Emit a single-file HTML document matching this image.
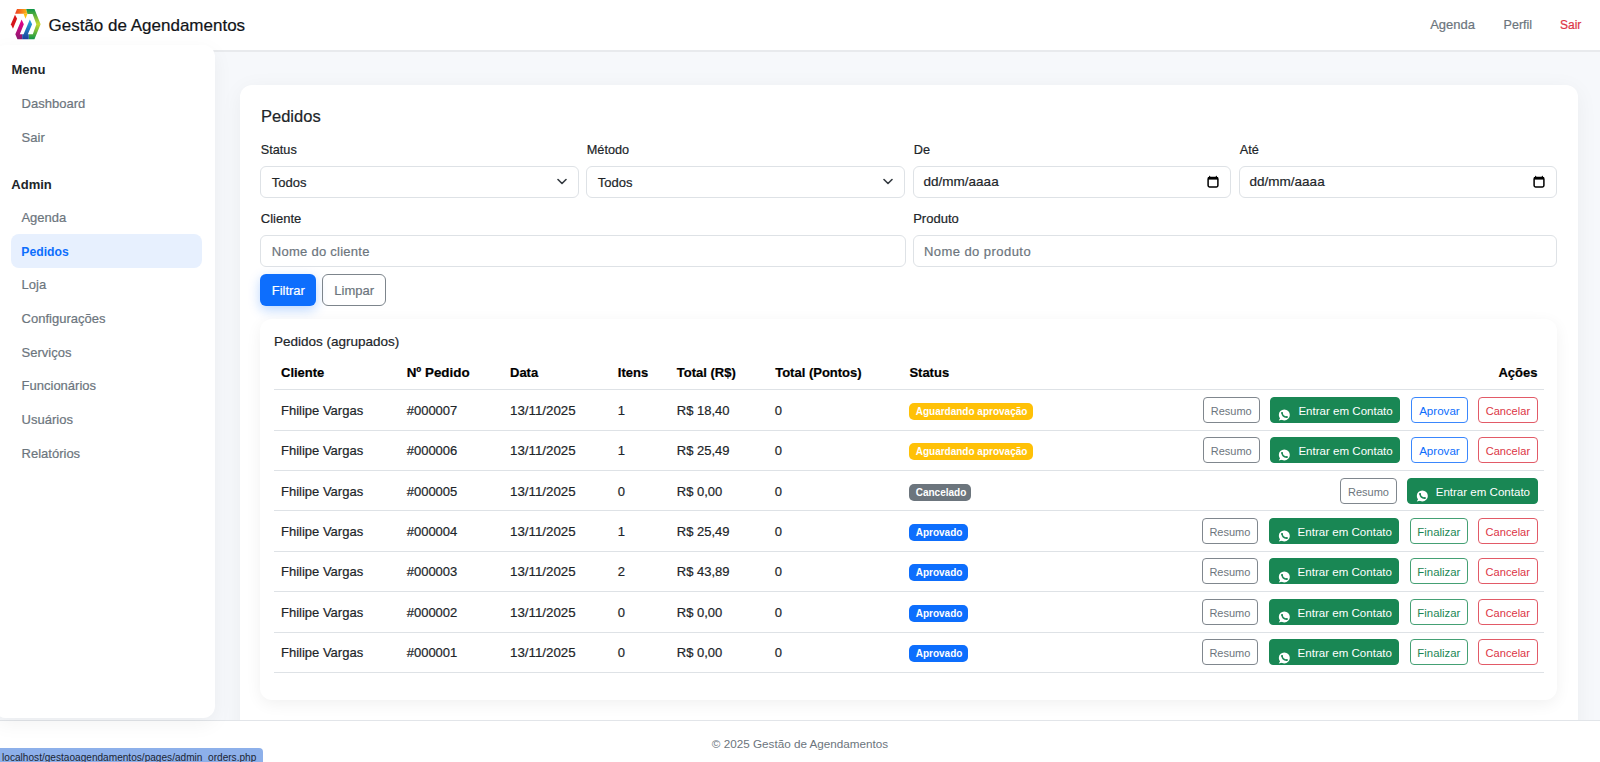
<!DOCTYPE html>
<html lang="pt-br">
<head>
<meta charset="utf-8">
<title>Gestão de Agendamentos</title>
<style>
*{box-sizing:border-box;margin:0;padding:0}
html,body{width:1600px;height:762px;overflow:hidden;background:#fff}
body{position:relative;font-family:"Liberation Sans",sans-serif;font-size:13px;color:#212529}
.abs{position:absolute}
.t{position:absolute;white-space:nowrap;line-height:1;-webkit-text-stroke:0.2px currentColor}
.layer{position:absolute;left:0;top:0;width:0;height:0}
#hdr{position:absolute;left:0;top:0;width:1600px;height:52px;background:#fff;border-bottom:2px solid #e8eaed}
#graybg{position:absolute;left:0;top:52px;width:1600px;height:668px;background:#f6f8fb}
#side{position:absolute;left:-6px;top:45px;width:221px;height:673px;background:#fff;border-radius:12px;box-shadow:0 6px 20px rgba(0,0,0,.05);z-index:5}
#main{position:absolute;left:240px;top:85px;width:1338px;height:700px;background:#fff;border-radius:12px;box-shadow:0 4px 22px rgba(0,0,0,.05);z-index:1}
#inner{position:absolute;left:260px;top:319px;width:1297px;height:381px;background:#fff;border-radius:12px;box-shadow:0 4px 16px rgba(0,0,0,.06)}
#foot{position:absolute;left:0;top:720px;width:1600px;height:42px;background:#fff;border-top:1px solid #e2e5e9;z-index:3}
#status{position:absolute;left:0;top:748px;width:263px;height:14px;background:#8db0ea;border-top-right-radius:4px;z-index:10}
.fc{position:absolute;height:32px;border:1px solid #dee2e6;border-radius:6px;background:#fff}
.btn{position:absolute;height:26px;border:1px solid;border-radius:4px;background:#fff}
.bres{border-color:#80878e;color:#6c757d}
.bwa{background:#198754;border-color:#198754;color:#fff}
.bapr{border-color:#3a87fd;color:#0d6efd}
.bfin{border-color:#44a074;color:#198754}
.bcan{border-color:#e25a67;color:#dc3545}
.badge{position:absolute;height:17px;border-radius:5px;color:#fff;font-weight:bold;font-size:10px;line-height:17px;padding:0 6.7px;white-space:nowrap;overflow:hidden}
.rline{position:absolute;left:274px;width:1270px;height:1px;background:#dee2e6}
</style>
</head>
<body>
<div id="hdr"></div>
<div id="graybg"></div>
<svg class="abs" style="left:8px;top:6px;z-index:6" width="36" height="36" viewBox="0 0 762 762">
  <defs>
    <linearGradient id="lgTop" x1="0" y1="0" x2="1" y2="0"><stop offset="0" stop-color="#ee3b24"/><stop offset="1" stop-color="#fdb913"/></linearGradient>
    <linearGradient id="lgGreen" x1="0" y1="0" x2="0" y2="1"><stop offset="0" stop-color="#0f9447"/><stop offset=".5" stop-color="#c6d92f"/><stop offset="1" stop-color="#0f9447"/></linearGradient>
    <linearGradient id="lgMag" x1="0" y1="0" x2="0" y2="1"><stop offset="0" stop-color="#ec008c"/><stop offset="1" stop-color="#8a1a6e"/></linearGradient>
    <linearGradient id="lgBlue" x1="0" y1="0" x2="0" y2="1"><stop offset="0" stop-color="#27aae1"/><stop offset="1" stop-color="#1b3f9a"/></linearGradient>
  </defs>
  <polygon points="190,65 385,65 410,165 150,165" fill="url(#lgTop)"/>
  <polygon points="330,165 412,165 370,270" fill="#fdc010"/>
  <polygon points="385,65 560,65 690,385 560,705 440,705 440,600 525,600 600,385 520,170 412,170" fill="url(#lgGreen)"/>
  <polygon points="148,185 192,268 105,480 62,388" fill="#d7141a"/>
  <polygon points="288,288 335,385 250,600 300,600 300,705 200,705 155,600" fill="url(#lgMag)"/>
  <polygon points="462,288 510,385 420,600 440,600 440,705 300,705 300,600 330,600" fill="url(#lgBlue)"/>
</svg>
<div class="t" style="left:48.50px;top:17.00px;font-size:17px;color:#111418">Gestão de Agendamentos</div>
<div class="t" style="left:1430.20px;top:18.00px;font-size:13px;color:#6c757d">Agenda</div>
<div class="t" style="left:1503.60px;top:19.00px;font-size:12.5px;color:#6c757d">Perfil</div>
<div class="t" style="left:1560.00px;top:19.00px;font-size:12px;color:#dc3545">Sair</div>
<div id="side"></div>
<div class="layer" style="z-index:6">
<div class="t" style="left:11.50px;top:63.00px;font-size:13px;color:#212529;font-weight:bold;-webkit-text-stroke:0">Menu</div>
<div class="t" style="left:21.60px;top:97.00px;font-size:13px;color:#6c757d">Dashboard</div>
<div class="t" style="left:21.60px;top:131.00px;font-size:13px;color:#6c757d">Sair</div>
<div class="t" style="left:11.30px;top:178.00px;font-size:13px;color:#212529;font-weight:bold;-webkit-text-stroke:0">Admin</div>
<div class="t" style="left:21.40px;top:211.00px;font-size:13px;color:#6c757d">Agenda</div>
<div class="abs" style="left:11px;top:234px;width:191px;height:34px;background:#e7f0fe;border-radius:8px"></div>
<div class="t" style="left:21.30px;top:246.00px;font-size:12.2px;color:#0d6efd;font-weight:bold;-webkit-text-stroke:0">Pedidos</div>
<div class="t" style="left:21.60px;top:278.00px;font-size:13px;color:#6c757d">Loja</div>
<div class="t" style="left:21.60px;top:312.00px;font-size:13px;color:#6c757d">Configurações</div>
<div class="t" style="left:21.60px;top:346.00px;font-size:13px;color:#6c757d">Serviços</div>
<div class="t" style="left:21.60px;top:379.00px;font-size:13px;color:#6c757d">Funcionários</div>
<div class="t" style="left:21.60px;top:413.00px;font-size:13px;color:#6c757d">Usuários</div>
<div class="t" style="left:21.60px;top:447.00px;font-size:13px;color:#6c757d">Relatórios</div>
</div>
<div id="main"></div>
<div class="layer" style="z-index:2">
<div class="t" style="left:261.00px;top:108.00px;font-size:16.5px;color:#212529">Pedidos</div>
<div class="t" style="left:260.80px;top:144.00px;font-size:12.7px;color:#212529">Status</div>
<div class="fc" style="left:260px;top:166px;width:319px"></div>
<div class="t" style="left:586.80px;top:144.00px;font-size:12.7px;color:#212529">Método</div>
<div class="fc" style="left:586px;top:166px;width:319px"></div>
<div class="t" style="left:913.80px;top:144.00px;font-size:12.7px;color:#212529">De</div>
<div class="fc" style="left:913px;top:166px;width:318px"></div>
<div class="t" style="left:1239.80px;top:144.00px;font-size:12.7px;color:#212529">Até</div>
<div class="fc" style="left:1239px;top:166px;width:318px"></div>
<div class="t" style="left:271.70px;top:176.00px;font-size:13px;color:#212529">Todos</div>
<svg class="abs" style="left:556.5px;top:178px" width="10" height="8" viewBox="0 0 10 8"><path d="M1 1.5 L5 5.5 L9 1.5" fill="none" stroke="#343a40" stroke-width="1.6" stroke-linecap="round" stroke-linejoin="round"/></svg>
<div class="t" style="left:597.70px;top:176.00px;font-size:13px;color:#212529">Todos</div>
<svg class="abs" style="left:882.5px;top:178px" width="10" height="8" viewBox="0 0 10 8"><path d="M1 1.5 L5 5.5 L9 1.5" fill="none" stroke="#343a40" stroke-width="1.6" stroke-linecap="round" stroke-linejoin="round"/></svg>
<div class="t" style="left:923.60px;top:175.00px;font-size:13.5px;color:#212529">dd/mm/aaaa</div>
<svg class="abs" style="left:1207px;top:175px" width="12" height="13" viewBox="0 0 12 13"><rect x="1.1" y="2.6" width="9.8" height="9.4" rx="1.4" fill="none" stroke="#000" stroke-width="1.5"/><rect x="1" y="2.2" width="10" height="2.4" fill="#000"/><path d="M2.6 0.4 L3.8 2.4 L1.6 2.4 Z M9.4 0.4 L10.4 2.4 L8.2 2.4 Z" fill="#000"/></svg>
<div class="t" style="left:1249.60px;top:175.00px;font-size:13.5px;color:#212529">dd/mm/aaaa</div>
<svg class="abs" style="left:1533px;top:175px" width="12" height="13" viewBox="0 0 12 13"><rect x="1.1" y="2.6" width="9.8" height="9.4" rx="1.4" fill="none" stroke="#000" stroke-width="1.5"/><rect x="1" y="2.2" width="10" height="2.4" fill="#000"/><path d="M2.6 0.4 L3.8 2.4 L1.6 2.4 Z M9.4 0.4 L10.4 2.4 L8.2 2.4 Z" fill="#000"/></svg>
<div class="t" style="left:260.80px;top:212.00px;font-size:13px;color:#212529">Cliente</div>
<div class="t" style="left:913.20px;top:212.00px;font-size:13px;color:#212529">Produto</div>
<div class="fc" style="left:260px;top:235px;width:646px"></div>
<div class="fc" style="left:913px;top:235px;width:644px"></div>
<div class="t" style="left:271.80px;top:245.00px;font-size:13px;color:#6c757d;letter-spacing:0.26px">Nome do cliente</div>
<div class="t" style="left:923.90px;top:245.00px;font-size:13px;color:#6c757d;letter-spacing:0.45px">Nome do produto</div>
<div class="abs" style="left:260px;top:273.5px;width:56px;height:32px;background:#0d6efd;border-radius:6px;box-shadow:0 4px 12px rgba(13,110,253,.28)"></div>
<div class="t" style="left:271.70px;top:284.00px;font-size:13px;color:#fff">Filtrar</div>
<div class="abs" style="left:322px;top:273.5px;width:64px;height:32px;border:1px solid #7d858c;border-radius:6px"></div>
<div class="t" style="left:334.30px;top:284.00px;font-size:13px;color:#6c757d">Limpar</div>
<div id="inner"></div>
<div class="t" style="left:274.00px;top:335.00px;font-size:13.5px;color:#212529">Pedidos (agrupados)</div>
<div class="t" style="left:281.00px;top:366.00px;font-size:13px;color:#000;font-weight:bold">Cliente</div>
<div class="t" style="left:406.70px;top:366.00px;font-size:13.4px;color:#000;font-weight:bold">Nº Pedido</div>
<div class="t" style="left:510.00px;top:366.00px;font-size:13px;color:#000;font-weight:bold">Data</div>
<div class="t" style="left:617.80px;top:366.00px;font-size:13px;color:#000;font-weight:bold">Itens</div>
<div class="t" style="left:676.80px;top:366.00px;font-size:13px;color:#000;font-weight:bold">Total (R$)</div>
<div class="t" style="left:775.20px;top:366.00px;font-size:13px;color:#000;font-weight:bold">Total (Pontos)</div>
<div class="t" style="left:909.40px;top:366.00px;font-size:13px;color:#000;font-weight:bold">Status</div>
<div class="t" style="left:1437.50px;top:366.00px;font-size:13px;color:#000;font-weight:bold;width:100px;text-align:right">Ações</div>
<div class="rline" style="top:389.2px"></div>
<div class="rline" style="top:429.6px"></div>
<div class="rline" style="top:470.2px"></div>
<div class="rline" style="top:510.4px"></div>
<div class="rline" style="top:550.9px"></div>
<div class="rline" style="top:591.4px"></div>
<div class="rline" style="top:631.7px"></div>
<div class="rline" style="top:672.3px"></div>
<div class="t" style="left:281.00px;top:404.00px;font-size:13px">Fhilipe Vargas</div>
<div class="t" style="left:406.70px;top:404.00px;font-size:13px">#000007</div>
<div class="t" style="left:510.00px;top:404.00px;font-size:13.3px">13/11/2025</div>
<div class="t" style="left:617.80px;top:404.00px;font-size:13px">1</div>
<div class="t" style="left:676.80px;top:404.00px;font-size:13px">R$ 18,40</div>
<div class="t" style="left:774.80px;top:404.00px;font-size:13px">0</div>
<div class="badge" style="left:909px;top:402.5px;width:124px;background:#ffc107">Aguardando aprovação</div>
<div class="btn bres" style="left:1202.7px;top:396.5px;width:57.0px"></div>
<div class="t" style="left:1202.70px;top:406.00px;font-size:11.0px;-webkit-text-stroke:0;color:#6c757d;width:57.0px;text-align:center">Resumo</div>
<div class="btn bwa" style="left:1270.0px;top:396.5px;width:130.2px"></div>
<svg class="abs" style="left:1277.3px;top:408.0px" width="14" height="14" viewBox="0 0 14 14"><circle cx="7.3" cy="6.9" r="5.5" fill="#fff"/><path d="M3.4 9.6 L1.8 12.6 L5.6 11.6 Z" fill="#fff"/><path d="M5.1 4.9 Q5.3 8.6 9.6 9.2" fill="none" stroke="#198754" stroke-width="1.4" stroke-linecap="round"/><circle cx="5.0" cy="4.9" r="0.95" fill="#198754"/><circle cx="9.9" cy="9.0" r="0.95" fill="#198754"/></svg>
<div class="t" style="left:1298.40px;top:406.00px;font-size:11.55px;-webkit-text-stroke:0;color:#fff">Entrar em Contato</div>
<div class="btn bapr" style="left:1411.2px;top:396.5px;width:56.5px"></div>
<div class="t" style="left:1411.20px;top:405.00px;font-size:11.6px;-webkit-text-stroke:0;color:#0d6efd;width:56.5px;text-align:center">Aprovar</div>
<div class="btn bcan" style="left:1478.0px;top:396.5px;width:59.8px"></div>
<div class="t" style="left:1478.00px;top:406.00px;font-size:11.1px;-webkit-text-stroke:0;color:#dc3545;width:59.8px;text-align:center">Cancelar</div>
<div class="t" style="left:281.00px;top:444.00px;font-size:13px">Fhilipe Vargas</div>
<div class="t" style="left:406.70px;top:444.00px;font-size:13px">#000006</div>
<div class="t" style="left:510.00px;top:444.00px;font-size:13.3px">13/11/2025</div>
<div class="t" style="left:617.80px;top:444.00px;font-size:13px">1</div>
<div class="t" style="left:676.80px;top:444.00px;font-size:13px">R$ 25,49</div>
<div class="t" style="left:774.80px;top:444.00px;font-size:13px">0</div>
<div class="badge" style="left:909px;top:442.9px;width:124px;background:#ffc107">Aguardando aprovação</div>
<div class="btn bres" style="left:1202.7px;top:436.9px;width:57.0px"></div>
<div class="t" style="left:1202.70px;top:446.00px;font-size:11.0px;-webkit-text-stroke:0;color:#6c757d;width:57.0px;text-align:center">Resumo</div>
<div class="btn bwa" style="left:1270.0px;top:436.9px;width:130.2px"></div>
<svg class="abs" style="left:1277.3px;top:448.4px" width="14" height="14" viewBox="0 0 14 14"><circle cx="7.3" cy="6.9" r="5.5" fill="#fff"/><path d="M3.4 9.6 L1.8 12.6 L5.6 11.6 Z" fill="#fff"/><path d="M5.1 4.9 Q5.3 8.6 9.6 9.2" fill="none" stroke="#198754" stroke-width="1.4" stroke-linecap="round"/><circle cx="5.0" cy="4.9" r="0.95" fill="#198754"/><circle cx="9.9" cy="9.0" r="0.95" fill="#198754"/></svg>
<div class="t" style="left:1298.40px;top:446.00px;font-size:11.55px;-webkit-text-stroke:0;color:#fff">Entrar em Contato</div>
<div class="btn bapr" style="left:1411.2px;top:436.9px;width:56.5px"></div>
<div class="t" style="left:1411.20px;top:445.00px;font-size:11.6px;-webkit-text-stroke:0;color:#0d6efd;width:56.5px;text-align:center">Aprovar</div>
<div class="btn bcan" style="left:1478.0px;top:436.9px;width:59.8px"></div>
<div class="t" style="left:1478.00px;top:446.00px;font-size:11.1px;-webkit-text-stroke:0;color:#dc3545;width:59.8px;text-align:center">Cancelar</div>
<div class="t" style="left:281.00px;top:485.00px;font-size:13px">Fhilipe Vargas</div>
<div class="t" style="left:406.70px;top:485.00px;font-size:13px">#000005</div>
<div class="t" style="left:510.00px;top:485.00px;font-size:13.3px">13/11/2025</div>
<div class="t" style="left:617.80px;top:485.00px;font-size:13px">0</div>
<div class="t" style="left:676.80px;top:485.00px;font-size:13px">R$ 0,00</div>
<div class="t" style="left:774.80px;top:485.00px;font-size:13px">0</div>
<div class="badge" style="left:909px;top:483.5px;width:62px;background:#6c757d">Cancelado</div>
<div class="btn bres" style="left:1340.0px;top:477.5px;width:57.0px"></div>
<div class="t" style="left:1340.00px;top:487.00px;font-size:11.0px;-webkit-text-stroke:0;color:#6c757d;width:57.0px;text-align:center">Resumo</div>
<div class="btn bwa" style="left:1407.3px;top:477.5px;width:130.4px"></div>
<svg class="abs" style="left:1414.6px;top:489.0px" width="14" height="14" viewBox="0 0 14 14"><circle cx="7.3" cy="6.9" r="5.5" fill="#fff"/><path d="M3.4 9.6 L1.8 12.6 L5.6 11.6 Z" fill="#fff"/><path d="M5.1 4.9 Q5.3 8.6 9.6 9.2" fill="none" stroke="#198754" stroke-width="1.4" stroke-linecap="round"/><circle cx="5.0" cy="4.9" r="0.95" fill="#198754"/><circle cx="9.9" cy="9.0" r="0.95" fill="#198754"/></svg>
<div class="t" style="left:1435.70px;top:487.00px;font-size:11.55px;-webkit-text-stroke:0;color:#fff">Entrar em Contato</div>
<div class="t" style="left:281.00px;top:525.00px;font-size:13px">Fhilipe Vargas</div>
<div class="t" style="left:406.70px;top:525.00px;font-size:13px">#000004</div>
<div class="t" style="left:510.00px;top:525.00px;font-size:13.3px">13/11/2025</div>
<div class="t" style="left:617.80px;top:525.00px;font-size:13px">1</div>
<div class="t" style="left:676.80px;top:525.00px;font-size:13px">R$ 25,49</div>
<div class="t" style="left:774.80px;top:525.00px;font-size:13px">0</div>
<div class="badge" style="left:909px;top:523.7px;width:59px;background:#0d6efd">Aprovado</div>
<div class="btn bres" style="left:1201.5px;top:517.7px;width:56.8px"></div>
<div class="t" style="left:1201.50px;top:527.00px;font-size:11.0px;-webkit-text-stroke:0;color:#6c757d;width:56.8px;text-align:center">Resumo</div>
<div class="btn bwa" style="left:1269.2px;top:517.7px;width:130.2px"></div>
<svg class="abs" style="left:1276.5px;top:529.2px" width="14" height="14" viewBox="0 0 14 14"><circle cx="7.3" cy="6.9" r="5.5" fill="#fff"/><path d="M3.4 9.6 L1.8 12.6 L5.6 11.6 Z" fill="#fff"/><path d="M5.1 4.9 Q5.3 8.6 9.6 9.2" fill="none" stroke="#198754" stroke-width="1.4" stroke-linecap="round"/><circle cx="5.0" cy="4.9" r="0.95" fill="#198754"/><circle cx="9.9" cy="9.0" r="0.95" fill="#198754"/></svg>
<div class="t" style="left:1297.60px;top:527.00px;font-size:11.55px;-webkit-text-stroke:0;color:#fff">Entrar em Contato</div>
<div class="btn bfin" style="left:1409.9px;top:517.7px;width:58.0px"></div>
<div class="t" style="left:1409.90px;top:527.00px;font-size:11.4px;-webkit-text-stroke:0;color:#198754;width:58.0px;text-align:center">Finalizar</div>
<div class="btn bcan" style="left:1477.9px;top:517.7px;width:59.8px"></div>
<div class="t" style="left:1477.90px;top:527.00px;font-size:11.1px;-webkit-text-stroke:0;color:#dc3545;width:59.8px;text-align:center">Cancelar</div>
<div class="t" style="left:281.00px;top:565.00px;font-size:13px">Fhilipe Vargas</div>
<div class="t" style="left:406.70px;top:565.00px;font-size:13px">#000003</div>
<div class="t" style="left:510.00px;top:565.00px;font-size:13.3px">13/11/2025</div>
<div class="t" style="left:617.80px;top:565.00px;font-size:13px">2</div>
<div class="t" style="left:676.80px;top:565.00px;font-size:13px">R$ 43,89</div>
<div class="t" style="left:774.80px;top:565.00px;font-size:13px">0</div>
<div class="badge" style="left:909px;top:564.2px;width:59px;background:#0d6efd">Aprovado</div>
<div class="btn bres" style="left:1201.5px;top:558.2px;width:56.8px"></div>
<div class="t" style="left:1201.50px;top:567.00px;font-size:11.0px;-webkit-text-stroke:0;color:#6c757d;width:56.8px;text-align:center">Resumo</div>
<div class="btn bwa" style="left:1269.2px;top:558.2px;width:130.2px"></div>
<svg class="abs" style="left:1276.5px;top:569.7px" width="14" height="14" viewBox="0 0 14 14"><circle cx="7.3" cy="6.9" r="5.5" fill="#fff"/><path d="M3.4 9.6 L1.8 12.6 L5.6 11.6 Z" fill="#fff"/><path d="M5.1 4.9 Q5.3 8.6 9.6 9.2" fill="none" stroke="#198754" stroke-width="1.4" stroke-linecap="round"/><circle cx="5.0" cy="4.9" r="0.95" fill="#198754"/><circle cx="9.9" cy="9.0" r="0.95" fill="#198754"/></svg>
<div class="t" style="left:1297.60px;top:567.00px;font-size:11.55px;-webkit-text-stroke:0;color:#fff">Entrar em Contato</div>
<div class="btn bfin" style="left:1409.9px;top:558.2px;width:58.0px"></div>
<div class="t" style="left:1409.90px;top:567.00px;font-size:11.4px;-webkit-text-stroke:0;color:#198754;width:58.0px;text-align:center">Finalizar</div>
<div class="btn bcan" style="left:1477.9px;top:558.2px;width:59.8px"></div>
<div class="t" style="left:1477.90px;top:567.00px;font-size:11.1px;-webkit-text-stroke:0;color:#dc3545;width:59.8px;text-align:center">Cancelar</div>
<div class="t" style="left:281.00px;top:606.00px;font-size:13px">Fhilipe Vargas</div>
<div class="t" style="left:406.70px;top:606.00px;font-size:13px">#000002</div>
<div class="t" style="left:510.00px;top:606.00px;font-size:13.3px">13/11/2025</div>
<div class="t" style="left:617.80px;top:606.00px;font-size:13px">0</div>
<div class="t" style="left:676.80px;top:606.00px;font-size:13px">R$ 0,00</div>
<div class="t" style="left:774.80px;top:606.00px;font-size:13px">0</div>
<div class="badge" style="left:909px;top:604.7px;width:59px;background:#0d6efd">Aprovado</div>
<div class="btn bres" style="left:1201.5px;top:598.7px;width:56.8px"></div>
<div class="t" style="left:1201.50px;top:608.00px;font-size:11.0px;-webkit-text-stroke:0;color:#6c757d;width:56.8px;text-align:center">Resumo</div>
<div class="btn bwa" style="left:1269.2px;top:598.7px;width:130.2px"></div>
<svg class="abs" style="left:1276.5px;top:610.2px" width="14" height="14" viewBox="0 0 14 14"><circle cx="7.3" cy="6.9" r="5.5" fill="#fff"/><path d="M3.4 9.6 L1.8 12.6 L5.6 11.6 Z" fill="#fff"/><path d="M5.1 4.9 Q5.3 8.6 9.6 9.2" fill="none" stroke="#198754" stroke-width="1.4" stroke-linecap="round"/><circle cx="5.0" cy="4.9" r="0.95" fill="#198754"/><circle cx="9.9" cy="9.0" r="0.95" fill="#198754"/></svg>
<div class="t" style="left:1297.60px;top:608.00px;font-size:11.55px;-webkit-text-stroke:0;color:#fff">Entrar em Contato</div>
<div class="btn bfin" style="left:1409.9px;top:598.7px;width:58.0px"></div>
<div class="t" style="left:1409.90px;top:608.00px;font-size:11.4px;-webkit-text-stroke:0;color:#198754;width:58.0px;text-align:center">Finalizar</div>
<div class="btn bcan" style="left:1477.9px;top:598.7px;width:59.8px"></div>
<div class="t" style="left:1477.90px;top:608.00px;font-size:11.1px;-webkit-text-stroke:0;color:#dc3545;width:59.8px;text-align:center">Cancelar</div>
<div class="t" style="left:281.00px;top:646.00px;font-size:13px">Fhilipe Vargas</div>
<div class="t" style="left:406.70px;top:646.00px;font-size:13px">#000001</div>
<div class="t" style="left:510.00px;top:646.00px;font-size:13.3px">13/11/2025</div>
<div class="t" style="left:617.80px;top:646.00px;font-size:13px">0</div>
<div class="t" style="left:676.80px;top:646.00px;font-size:13px">R$ 0,00</div>
<div class="t" style="left:774.80px;top:646.00px;font-size:13px">0</div>
<div class="badge" style="left:909px;top:645.0px;width:59px;background:#0d6efd">Aprovado</div>
<div class="btn bres" style="left:1201.5px;top:639.0px;width:56.8px"></div>
<div class="t" style="left:1201.50px;top:648.00px;font-size:11.0px;-webkit-text-stroke:0;color:#6c757d;width:56.8px;text-align:center">Resumo</div>
<div class="btn bwa" style="left:1269.2px;top:639.0px;width:130.2px"></div>
<svg class="abs" style="left:1276.5px;top:650.5px" width="14" height="14" viewBox="0 0 14 14"><circle cx="7.3" cy="6.9" r="5.5" fill="#fff"/><path d="M3.4 9.6 L1.8 12.6 L5.6 11.6 Z" fill="#fff"/><path d="M5.1 4.9 Q5.3 8.6 9.6 9.2" fill="none" stroke="#198754" stroke-width="1.4" stroke-linecap="round"/><circle cx="5.0" cy="4.9" r="0.95" fill="#198754"/><circle cx="9.9" cy="9.0" r="0.95" fill="#198754"/></svg>
<div class="t" style="left:1297.60px;top:648.00px;font-size:11.55px;-webkit-text-stroke:0;color:#fff">Entrar em Contato</div>
<div class="btn bfin" style="left:1409.9px;top:639.0px;width:58.0px"></div>
<div class="t" style="left:1409.90px;top:648.00px;font-size:11.4px;-webkit-text-stroke:0;color:#198754;width:58.0px;text-align:center">Finalizar</div>
<div class="btn bcan" style="left:1477.9px;top:639.0px;width:59.8px"></div>
<div class="t" style="left:1477.90px;top:648.00px;font-size:11.1px;-webkit-text-stroke:0;color:#dc3545;width:59.8px;text-align:center">Cancelar</div>
</div>
<div id="foot"></div>
<div class="t" style="left:0.00px;top:738.00px;font-size:11.7px;-webkit-text-stroke:0;color:#6c757d;width:1600px;text-align:center;z-index:4">© 2025 Gestão de Agendamentos</div>
<div id="status"></div>
<div class="t" style="left:2.10px;top:753.00px;font-size:10.1px;-webkit-text-stroke:0;color:#1b2533;z-index:11">localhost/gestaoagendamentos/pages/admin_orders.php</div>
</body>
</html>
